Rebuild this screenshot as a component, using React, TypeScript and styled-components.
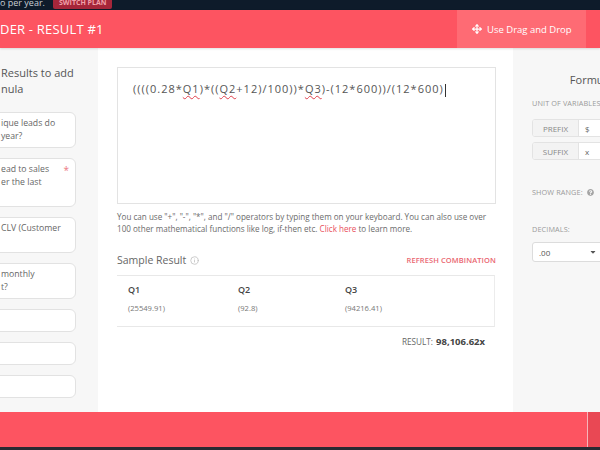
import styled, { createGlobalStyle } from "styled-components";
import { Move, Info } from "lucide-react";
import { FaQuestionCircle, FaCaretDown } from "react-icons/fa";

const RED = "#fd5461";

const GlobalStyle = createGlobalStyle`
  html, body {
    margin: 0;
    padding: 0;
  }
  body {
    font-family: "Open Sans", "Liberation Sans", sans-serif;
    background: #fff;
  }
  * {
    box-sizing: border-box;
  }
`;

const Page = styled.div`
  width: 600px;
  height: 450px;
  overflow: hidden;
  display: flex;
  flex-direction: column;
`;

const TopBar = styled.div`
  height: 10px;
  flex-shrink: 0;
  background: #0e1b2a;
  display: flex;
  align-items: flex-end;
  gap: 8px;
  overflow: hidden;
  font-size: 9px;
  color: #c9ced4;
`;

const TopText = styled.span`
  line-height: 14px;
  white-space: nowrap;
`;

const PlanBadge = styled.span`
  background: #a6263a;
  color: #f0a0a9;
  font-size: 7px;
  font-weight: 700;
  line-height: 13px;
  padding: 0 6px;
  margin-bottom: 1px;
  border-radius: 2px;
  white-space: nowrap;
`;

const Header = styled.header`
  height: 38px;
  flex-shrink: 0;
  background: ${RED};
  display: flex;
  align-items: stretch;
  overflow: hidden;
  box-shadow: 0 1px 2px rgba(0, 0, 0, 0.12);
  position: relative;
  z-index: 1;
`;

const Title = styled.h1`
  margin: 0;
  width: 457px;
  flex-shrink: 0;
  align-self: center;
  font-size: 13px;
  font-weight: 500;
  color: #fff;
  white-space: nowrap;
  letter-spacing: 0.2px;
`;

const HeaderButton = styled.button<{ $active?: boolean }>`
  display: flex;
  align-items: center;
  gap: 5px;
  border: 0;
  background: ${p => (p.$active ? "#fe6b74" : "transparent")};
  color: #fff;
  font-family: inherit;
  font-size: 9.5px;
  padding: 0 14px 0 15px;
  white-space: nowrap;
  flex-shrink: 0;
`;

const Body = styled.div`
  flex: 1;
  display: flex;
  min-height: 0;
`;

const Sidebar = styled.aside`
  width: 98px;
  flex-shrink: 0;
  background: #f7f7f7;
  overflow: hidden;
  padding: 17px 22px 0 0;
  display: flex;
  flex-direction: column;
  gap: 10px;
`;

const SideTitle = styled.div`
  font-size: 11px;
  line-height: 16px;
  color: #555;
  padding-left: 1px;
  margin-bottom: 5px;
  white-space: nowrap;
`;

const Card = styled.div`
  position: relative;
  margin-left: -10px;
  padding: 4px 8px 4px 10px;
  background: #fff;
  border: 1px solid #e2e2e2;
  border-radius: 6px;
  font-size: 8.7px;
  line-height: 13px;
  color: #666;
  white-space: nowrap;
`;

const Required = styled.span`
  position: absolute;
  top: 5px;
  right: 6px;
  color: #ec7a83;
  font-size: 10px;
`;

const Main = styled.main`
  flex: 1;
  min-width: 0;
  background: #fff;
  padding: 19px 17px 0 19px;
  display: flex;
  flex-direction: column;
`;

const FormulaBox = styled.div`
  height: 137px;
  border: 1px solid #e3e3e3;
  padding: 14px 15px;
  font-size: 11px;
  line-height: 14px;
  letter-spacing: 1px;
  color: #555;
  white-space: nowrap;
`;

const Var = styled.span`
  text-decoration: underline wavy #e0404d;
  text-decoration-thickness: 1px;
  text-underline-offset: 2px;
`;

const Caret = styled.span`
  display: inline-block;
  width: 1px;
  height: 13px;
  background: #333;
  vertical-align: middle;
  margin-left: 1px;
`;

const Help = styled.p`
  margin: 7px 0 0;
  font-size: 8.1px;
  line-height: 12px;
  color: #6b6b6b;
`;

const Link = styled.a`
  color: #e9505c;
  text-decoration: none;
`;

const SectionHead = styled.div`
  margin-top: 18px;
  display: flex;
  align-items: center;
  justify-content: space-between;
  line-height: 14px;
`;

const SectionTitle = styled.span`
  display: flex;
  align-items: center;
  gap: 4px;
  font-size: 10.5px;
  color: #666;
`;

const RefreshLink = styled.span`
  font-size: 7.5px;
  font-weight: 600;
  color: #ea6670;
  letter-spacing: 0.1px;
`;

const SampleTable = styled.div`
  margin-top: 8px;
  margin-right: 1px;
  border-top: 1px solid #e8e8e8;
  border-bottom: 1px solid #e8e8e8;
  border-right: 1px solid #ececec;
  padding: 8px 0 12px 11px;
  display: grid;
  grid-template-columns: 110px 107px 1fr;
  row-gap: 6px;
  line-height: 12px;
`;

const ColHead = styled.span`
  font-size: 9px;
  font-weight: 600;
  color: #444;
`;

const ColValue = styled.span`
  font-size: 7.6px;
  color: #777;
`;

const ResultRow = styled.div`
  margin-top: 8px;
  padding-right: 11px;
  text-align: right;
  line-height: 14px;
  font-size: 8.2px;
  color: #666;

  strong {
    font-size: 9.5px;
    font-weight: 700;
    color: #444;
    margin-left: 1px;
  }
`;

const Settings = styled.aside`
  width: 87px;
  flex-shrink: 0;
  background: #f7f7f7;
  overflow: hidden;
  padding: 24px 0 0 19px;
`;

const SettingsInner = styled.div`
  width: 170px;
  display: flex;
  flex-direction: column;
`;

const SettingsTitle = styled.div`
  font-size: 11px;
  line-height: 16px;
  color: #555;
  text-align: center;
  white-space: nowrap;
  padding-right: 8px;
`;

const FieldLabel = styled.div<{ $gap: number }>`
  margin-top: ${p => p.$gap}px;
  display: flex;
  align-items: center;
  gap: 4px;
  font-size: 7.3px;
  line-height: 10px;
  color: #9a9a9a;
  white-space: nowrap;
  letter-spacing: 0.1px;

  svg {
    color: #a5a5a5;
  }
`;

const InputGroup = styled.div<{ $gap: number }>`
  margin-top: ${p => p.$gap}px;
  height: 18px;
  display: flex;
  border: 1px solid #e3e3e3;
  border-radius: 3px;
  overflow: hidden;
  background: #fff;
`;

const Addon = styled.span`
  width: 46px;
  flex-shrink: 0;
  background: #f3f3f3;
  border-right: 1px solid #e3e3e3;
  display: flex;
  align-items: center;
  justify-content: center;
  font-size: 8px;
  color: #888;
`;

const AddonValue = styled.span`
  padding-left: 6px;
  display: flex;
  align-items: center;
  font-size: 8px;
  color: #666;
`;

const Select = styled.div`
  margin-top: 8px;
  width: 72px;
  height: 20px;
  border: 1px solid #dcdcdc;
  border-radius: 3px;
  background: #fff;
  display: flex;
  align-items: center;
  justify-content: space-between;
  padding: 0 6px;
  font-size: 8px;
  color: #555;

  svg {
    color: #555;
  }
`;

const Footer = styled.footer`
  height: 35px;
  flex-shrink: 0;
  background: ${RED};
  display: flex;
  justify-content: flex-end;
  border-bottom: 3px solid #2a2a32;
  box-sizing: content-box;
  overflow: hidden;
`;

const FooterButton = styled.button`
  width: 10px;
  flex-shrink: 0;
  border: 0;
  border-left: 1px solid rgba(255, 255, 255, 0.6);
  background: #e94854;
  color: transparent;
  overflow: hidden;
`;

const cards: { lines: string[]; required?: boolean }[] = [
  { lines: ["ique leads do", "year?"] },
  { lines: ["ead to sales", "er the last", ""], required: true },
  { lines: ["CLV (Customer", ""] },
  { lines: ["monthly", "t?"] },
  { lines: [""] },
  { lines: [""] },
  { lines: [""] },
];

function App() {
  return (
    <Page>
      <GlobalStyle />
      <TopBar>
        <TopText>o per year.</TopText>
        <PlanBadge>SWITCH PLAN</PlanBadge>
      </TopBar>

      <Header>
        <Title>DER - RESULT #1</Title>
        <HeaderButton $active>
          <Move size={10} strokeWidth={3} />
          Use Drag and Drop
        </HeaderButton>
        <HeaderButton>Preview</HeaderButton>
      </Header>

      <Body>
        <Sidebar>
          <SideTitle>
            Results to add
            <br />
            nula
          </SideTitle>
          {cards.map((c, i) => (
            <Card key={i}>
              {c.lines.map((l, j) => (
                <div key={j}>{l || "\u00a0"}</div>
              ))}
              {c.required && <Required>*</Required>}
            </Card>
          ))}
        </Sidebar>

        <Main>
          <FormulaBox>
            ((((0.28*<Var>Q1</Var>)*((<Var>Q2</Var>+12)/100))*<Var>Q3</Var>)-(12*600))/(12*600)
            <Caret />
          </FormulaBox>
          <Help>
            You can use "+", "-", "*", and "/" operators by typing them on your keyboard. You can also use over
            100 other mathematical functions like log, if-then etc. <Link>Click here</Link> to learn more.
          </Help>

          <SectionHead>
            <SectionTitle>
              Sample Result
              <Info size={9} color="#bbb" />
            </SectionTitle>
            <RefreshLink>REFRESH COMBINATION</RefreshLink>
          </SectionHead>

          <SampleTable>
            <ColHead>Q1</ColHead>
            <ColHead>Q2</ColHead>
            <ColHead>Q3</ColHead>
            <ColValue>(25549.91)</ColValue>
            <ColValue>(92.8)</ColValue>
            <ColValue>(94216.41)</ColValue>
          </SampleTable>

          <ResultRow>
            RESULT: <strong>98,106.62x</strong>
          </ResultRow>
        </Main>

        <Settings>
          <SettingsInner>
            <SettingsTitle>Formula Settings</SettingsTitle>
            <FieldLabel $gap={10}>UNIT OF VARIABLES</FieldLabel>
            <InputGroup $gap={11}>
              <Addon>PREFIX</Addon>
              <AddonValue>$</AddonValue>
            </InputGroup>
            <InputGroup $gap={5}>
              <Addon>SUFFIX</Addon>
              <AddonValue>x</AddonValue>
            </InputGroup>
            <FieldLabel $gap={27}>
              SHOW RANGE:
              <FaQuestionCircle size={7} />
            </FieldLabel>
            <FieldLabel $gap={27}>DECIMALS:</FieldLabel>
            <Select>
              .00
              <FaCaretDown size={8} />
            </Select>
          </SettingsInner>
        </Settings>
      </Body>

      <Footer>
        <FooterButton>Save</FooterButton>
      </Footer>
    </Page>
  );
}

export default App;
